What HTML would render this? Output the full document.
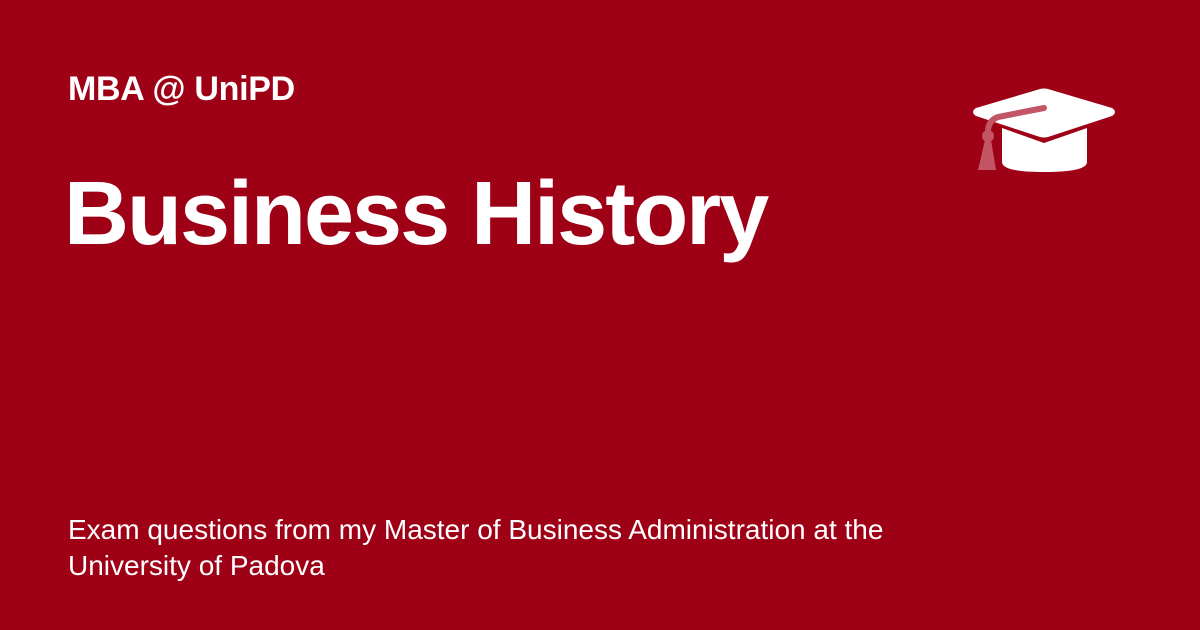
<!DOCTYPE html>
<html><head><style>
body{margin:0;width:1200px;height:630px;background:#9e0016;font-family:"Liberation Sans",sans-serif;color:#fff;position:relative;overflow:hidden}
.a{position:absolute;left:68px;top:70px;font-size:34px;font-weight:bold;letter-spacing:-0.3px}
.b{position:absolute;left:64px;top:163px;font-size:90px;font-weight:bold;letter-spacing:-2px}
.c{position:absolute;left:68px;top:512px;font-size:28px;line-height:36px;width:1000px}
svg{position:absolute;left:0;top:0}
</style></head><body>
<div class="a">MBA @ UniPD</div>
<div class="b">Business History</div>
<div class="c">Exam questions from my Master of Business Administration at the<br>University of Padova</div>
<svg width="1200" height="630">
<path d="M1002 128 L1002 162 Q1002 172 1044 172 Q1087 172 1087 162 L1087 128 L1044 143 Z" fill="#fff"/>
<path d="M976 108 L1040 89 Q1044 88 1048 89 L1112 108 Q1118 112 1112 116 L1048 137 Q1044 138 1040 137 L976 116 Q970 112 976 108 Z" fill="#fff"/>
<path d="M1044 108 L998 117 Q989 120 988 130" stroke="#c45565" stroke-width="6" fill="none" stroke-linecap="round"/>
<circle cx="988" cy="136" r="6" fill="#c45565"/>
<path d="M985 140 L991 140 L996 170 L978 170 Z" fill="#c45565"/>
</svg>
</body></html>
